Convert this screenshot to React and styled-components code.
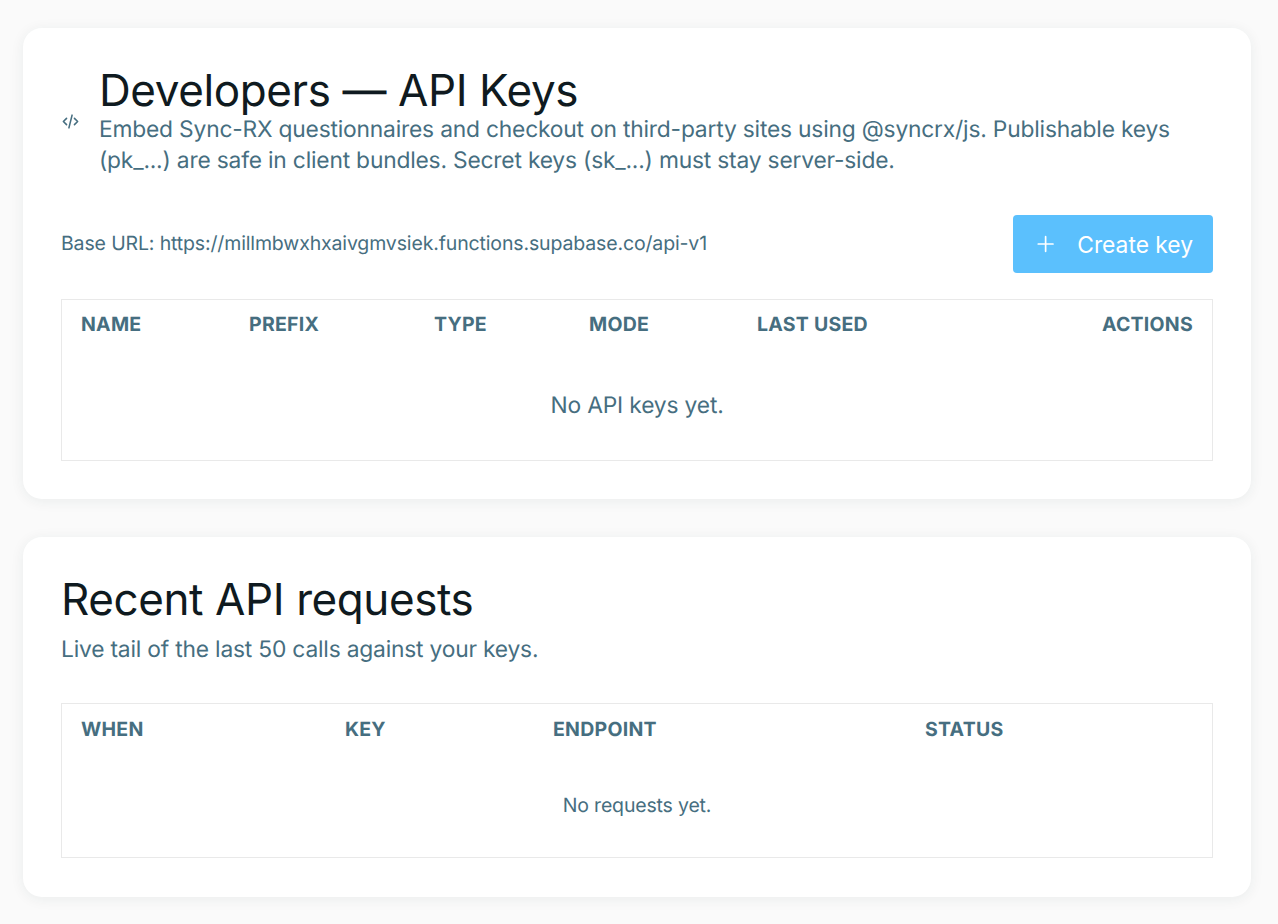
import React from "react"
import styled, { createGlobalStyle } from "styled-components"
import { Plus } from "lucide-react"

const Global = createGlobalStyle`
body{
    margin: 0;
    background-color: #fafafa;
    font-family: Inter, "Liberation Sans", sans-serif;
    color: #0f1a20;
    text-rendering: geometricPrecision;
}
`

const Page = styled.div`
    display: flex;
    flex-direction: column;
    gap: 38px;
    padding: 28px 27px 27px 23px;
`

const Card = styled.section`
    background-color: white;
    border-radius: 19px;
    padding: 38px 38px ${(props) => props.$bottom || "38px"};
    box-shadow: 0 2px 14px rgba(30, 50, 60, 0.07);
`

const Header = styled.div`
    display: flex;
    align-items: center;
    gap: 19px;
`

const CodeIcon = styled.svg`
    width: 19px;
    height: 19px;
    flex: none;
    color: #466e80;
`

const Title = styled.h1`
    margin: 0;
    font-size: 44px;
    line-height: 48px;
    font-weight: 400;
    letter-spacing: -0.4px;
    color: #0f1a20;
`

const Description = styled.p`
    margin: ${(props) => props.$margin || "0"};
    font-size: 22.8px;
    line-height: 31px;
    letter-spacing: -0.2px;
    color: #466e80;
`

const Toolbar = styled.div`
    display: flex;
    justify-content: space-between;
    align-items: center;
    margin: 39px 0 26px;
`

const BaseUrl = styled.span`
    padding-bottom: 2px;
    font-size: 19.5px;
    letter-spacing: -0.14px;
    color: #466e80;
`

const Button = styled.button`
    display: flex;
    align-items: center;
    gap: 19px;
    height: 58px;
    width: 200px;
    padding: 0 20px;
    border: 0;
    border-radius: 4px;
    background-color: #5bc0fd;
    color: white;
    font-family: inherit;
    font-size: 22.8px;
    white-space: nowrap;
`

const Table = styled.table`
    width: 100%;
    border-collapse: collapse;
    table-layout: fixed;
    border: 1px solid #e9e9e9;
`

const Th = styled.th`
    text-align: ${(props) => (props.$right ? "right" : "left")};
    width: ${(props) => props.$width || "auto"};
    padding: ${(props) => (props.$low ? "13px 19px 11px" : "11px 19px 13px")};
    height: 25px;
    font-size: 19.5px;
    line-height: 24px;
    font-weight: 700;
    letter-spacing: 0.25px;
    color: #466e80;
`

const Empty = styled.td`
    box-sizing: border-box;
    text-align: center;
    color: #466e80;
    font-size: ${(props) => props.$size};
    letter-spacing: -0.17px;
    height: ${(props) => props.$height};
    padding: ${(props) => props.$top} 0 0;
`

const App = () => {
    return (
        <>
            <Global />
            <Page>
                <Card>
                    <Header>
                        <CodeIcon viewBox="0 0 24 24" fill="none" stroke="currentColor" strokeWidth="2" strokeLinecap="round" strokeLinejoin="round">
                            <path d="m7 8-4 4 4 4" />
                            <path d="m17 8 4 4-4 4" />
                            <path d="m14 4-4 16" />
                        </CodeIcon>
                        <div>
                            <Title>Developers — API Keys</Title>
                            <Description>
                                Embed Sync-RX questionnaires and checkout on third-party sites using @syncrx/js. Publishable keys (pk_...) are safe in client bundles. Secret keys (sk_...) must stay server-side.
                            </Description>
                        </div>
                    </Header>
                    <Toolbar>
                        <BaseUrl>Base URL: https://millmbwxhxaivgmvsiek.functions.supabase.co/api-v1</BaseUrl>
                        <Button><Plus size={26} strokeWidth={1.6} />Create key</Button>
                    </Toolbar>
                    <Table>
                        <thead>
                            <tr>
                                <Th $width="130px">NAME</Th>
                                <Th $width="147px">PREFIX</Th>
                                <Th $width="117px">TYPE</Th>
                                <Th $width="130px">MODE</Th>
                                <Th $width="162px">LAST USED</Th>
                                <Th $right>ACTIONS</Th>
                            </tr>
                        </thead>
                        <tbody>
                            <tr>
                                <Empty colSpan={6} $size="22.8px" $height="111px" $top="2px">No API keys yet.</Empty>
                            </tr>
                        </tbody>
                    </Table>
                </Card>
                <Card $bottom="39px">
                    <Title>Recent API requests</Title>
                    <Description $margin="11px 0 38px">Live tail of the last 50 calls against your keys.</Description>
                    <Table>
                        <thead>
                            <tr>
                                <Th $low $width="226px">WHEN</Th>
                                <Th $low $width="170px">KEY</Th>
                                <Th $low $width="334px">ENDPOINT</Th>
                                <Th $low>STATUS</Th>
                            </tr>
                        </thead>
                        <tbody>
                            <tr>
                                <Empty colSpan={4} $size="19.5px" $height="105px" $top="1px">No requests yet.</Empty>
                            </tr>
                        </tbody>
                    </Table>
                </Card>
            </Page>
        </>
    )
}

export default App
